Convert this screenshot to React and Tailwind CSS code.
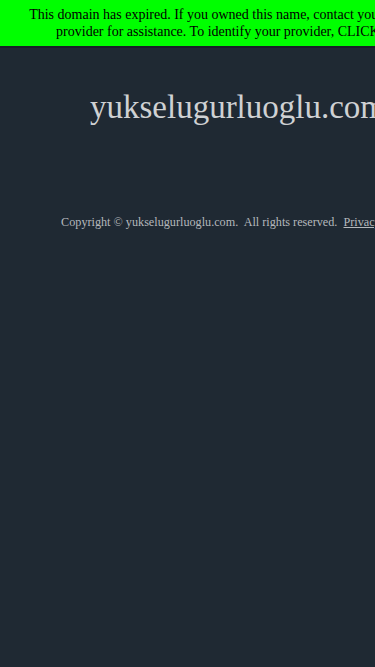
import React from "react";

const App = () => {
  return (
    <div className="min-h-[667px] w-[375px] overflow-hidden bg-[#1f2933] font-['Liberation_Serif',serif]">
      <div className="w-[568px]">
        <div className="border-b-2 border-[#182027] bg-[#00ff00] px-[27px] pt-[6px] pb-[6px] text-center text-[14px] leading-[17px] text-black">
          This domain has expired. If you owned this name, contact your domain
          registration service provider for assistance. To identify your
          provider, CLICK HERE to run a lookup.
        </div>
        <div className="w-[476px]">
          <h1 className="mt-[41px] text-center text-[33px] leading-[36px] text-[#cfd1d3]">
            yukselugurluoglu.com
          </h1>
          <p className="mt-[89px] text-center text-[12.2px] leading-[16px] text-[#b4b8bc]">
            Copyright © yukselugurluoglu.com.&nbsp; All rights reserved.&nbsp;{" "}
            <a className="underline">Privacy Policy</a>
          </p>
        </div>
      </div>
    </div>
  );
};

export default App;
